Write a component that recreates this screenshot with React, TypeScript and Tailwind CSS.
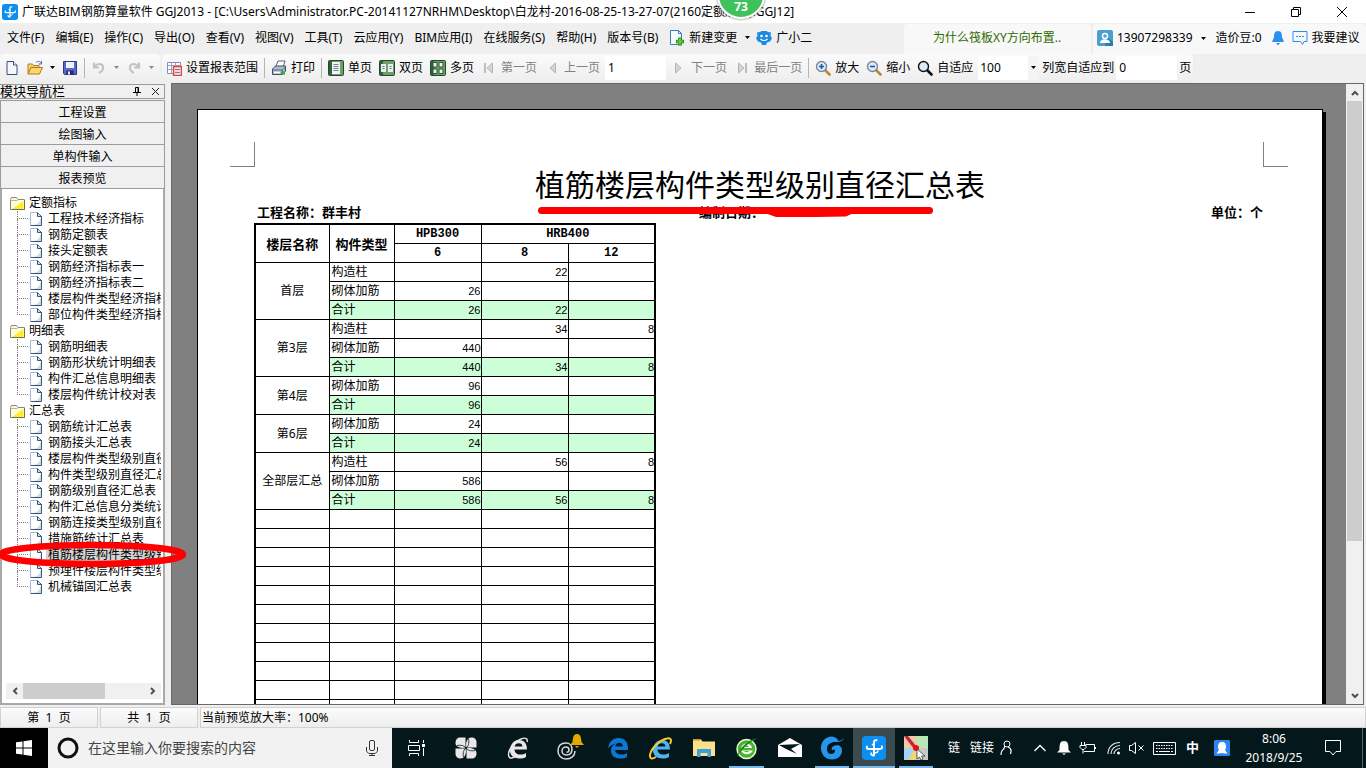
import React from "react";

const UI = "font-['Noto_Sans','Noto_Sans_CJK_SC',sans-serif]";

function Svg({ w = 16, h = 16, box, children, className = "" }: { w?: number; h?: number; box?: string; children: React.ReactNode; className?: string }) {
  return (
    <svg width={w} height={h} viewBox={box ?? `0 0 ${w} ${h}`} fill="none" aria-hidden="true" className={`shrink-0 ${className}`}>
      {children}
    </svg>
  );
}

const Caret = ({ color = "#000" }: { color?: string }) => (
  <Svg w={5} h={3}><path d="M0 0h5L2.500 3z" fill={color} /></Svg>
);

const Logo = ({ size }: { size: number }) => (
  <Svg w={size} h={size} box="0 0 24 24">
    <rect width="24" height="24" rx="4" fill="#0d8ff0" />
    <path d="M12 19.500c-2.200 0-3-1-2.800-2M12 19V6.500c0-2 .8-2.500 2.600-2.200M5 10.500c-.8 1.500 0 2.500 1.800 2.500H18c2 0 2.300-1 1.800-2.500" stroke="#fff" strokeWidth="1.900" strokeLinecap="round" />
    <path d="M12 8.500H9.800M12 16.500c2.500 1 4-.5 4-2" stroke="#fff" strokeWidth="1.500" />
  </Svg>
);

const DocIcon = () => (
  <Svg w={12} h={14}>
    <path d="M.5.500h7l4 4v9H.5z" fill="#fff" />
    <path d="M2 13c5 0 8-3 9-8v8z" fill="#d3dcee" />
    <path d="M.5 13V.5H7" stroke="#a9b8d6" />
    <path d="M7.500.500v4h4M7.500.500l4 4v9H.5" stroke="#3a5478" />
    <path d="M8.500 1.500v2h2z" fill="#9fb2d0" />
  </Svg>
);

const FolderIcon = () => (
  <Svg w={15} h={13}>
    <path d="M.5 12.500v-10l1-2h5l1.500 2h6.500v10z" fill="#fffde0" stroke="#8a8a6a" />
    <path d="M2 12L13.500 4v8z" fill="#ffef20" />
    <path d="M.5 3.500h7" stroke="#bbb890" />
    <path d="M14.500 3v9.500H1" stroke="#6b6b6b" />
  </Svg>
);

const NewIcon = () => (
  <Svg><path d="M3 1.500h6.500l3.500 3.500v9.500H3z" fill="#f4f7fd" stroke="#3b4e78" /><path d="M9.500 1.500V5H13" fill="#fff" stroke="#3b4e78" /></Svg>
);
const OpenIcon = () => (
  <Svg>
    <path d="M1 13.500V4h4.500l1 1.500H12V8" fill="#f3cf68" stroke="#b0822a" />
    <path d="M1 14l3-6.500h11.500L12.500 14z" fill="#ffd766" stroke="#a97a22" />
    <path d="M9 2.500c2-2 4-1 5 .5M14.500 1v3h-3" stroke="#4b6f9c" />
  </Svg>
);
const SaveIcon = () => (
  <Svg>
    <path d="M1.500 1.500h13v13h-12l-1-1z" fill="#5a68c8" stroke="#2c3a8c" />
    <path d="M4 2h8v6H4z" fill="#edf1fb" /><path d="M4.500 10.500h7v4h-7z" fill="#1f2a66" /><path d="M6 11.500h2v3H6z" fill="#e7ebfa" />
  </Svg>
);
const UndoIcon = ({ flip = false }: { flip?: boolean }) => (
  <Svg>
    <g transform={flip ? "translate(16 0) scale(-1 1)" : undefined}>
      <path d="M3 2.500v5h5M3.500 7C6 3 11.500 3 12 7c.4 3-2 5-4 6" stroke="#c3c3c3" strokeWidth="2.200" />
    </g>
  </Svg>
);
const RangeIcon = () => (
  <Svg>
    <path d="M1.500 2.500h13v11h-13z" fill="#fff" stroke="#8190b4" />
    <path d="M1.500 5.500h13M1.500 9.500h13M5.500 2.500v11M9.500 2.500v11" stroke="#9aa7c8" />
    <path d="M7.500 6.500h8v9h-8z" fill="#f8dcdc" stroke="#e04343" strokeWidth="1.400" /><path d="M9 9.500h5M9 12.500h5" stroke="#77809c" />
  </Svg>
);
const PrintIcon = () => (
  <Svg>
    <path d="M5 6l2-5h7l-1.500 5" fill="#fff" stroke="#54657c" />
    <path d="M1.500 9l3-3h10v5l-2.500 3.500H1.500z" fill="#aebccb" stroke="#3e4e62" />
    <path d="M1.500 10h10v4.500M11.500 10l3-3" stroke="#5a6a80" /><path d="M3 12.500h6" stroke="#fff" strokeWidth="1.500" />
    <rect x="10" y="11.500" width="4" height="3" fill="#2fb52f" />
  </Svg>
);
const PageIcon = ({ kind }: { kind: "one" | "two" | "many" }) => (
  <Svg>
    <rect x=".5" y=".5" width="15" height="15" rx="1" fill="#6f9f66" stroke="#1f4b2b" />
    <path d="M1 1h3v14H1z" fill="#2f6339" />
    {kind === "one" && <><path d="M4 2h8v12H4z" fill="#f1f5f8" /><path d="M5.500 4.500h5M5.500 6.500h5M5.500 8.500h5M5.500 10.500h5" stroke="#6f8193" /></>}
    {kind === "two" && <><path d="M2 4h5v8H2zM9 4h5v8H9z" fill="#e8eef6" /><path d="M3.500 6.500h2M3.500 8.500h2M10.500 6.500h2M10.500 8.500h2" stroke="#5f7593" /></>}
    {kind === "many" && <path d="M3 2.500h4v4.500H3zM9 2.500h4v4.500H9zM3 9h4v4.500H3zM9 9h4v4.500H9z" fill="#e8f1e5" stroke="#31583a" />}
  </Svg>
);
const StepIcon = ({ dir, bar = false }: { dir: "l" | "r"; bar?: boolean }) => (
  <Svg>
    <g transform={dir === "r" ? "translate(16 0) scale(-1 1)" : undefined}>
      <path d="M11.500 3v10L6 8z" fill="#d5d5d5" stroke="#b4b4b4" />
      {bar && <path d="M4 3v10" stroke="#bdbdbd" strokeWidth="2" />}
    </g>
  </Svg>
);
const ZoomIcon = ({ sign }: { sign: "+" | "-" | "" }) => (
  <Svg>
    <path d="M10 10l4.500 4.500" stroke={sign ? "#b88a2c" : "#111"} strokeWidth="2.600" strokeLinecap="round" />
    <circle cx="6.500" cy="6.500" r="5" fill="#dceafa" stroke={sign ? "#7b8797" : "#111"} strokeWidth="1.400" />
    {sign && <path d={sign === "+" ? "M4 6.500h5M6.500 4v5" : "M4 6.500h5"} stroke="#23579b" strokeWidth="1.600" />}
  </Svg>
);

const Sep = () => <span className="-mx-px h-5 w-px bg-[#b5b5b5]" />;

function Tool({ icon, label, disabled = false }: { icon: React.ReactNode; label: string; disabled?: boolean }) {
  return (
    <button className={`flex shrink-0 items-center gap-1 whitespace-nowrap ${disabled ? "text-[#828282]" : "text-black"}`}>
      {icon}
      {label}
    </button>
  );
}

const menus = ["文件(F)", "编辑(E)", "操作(C)", "导出(O)", "查看(V)", "视图(V)", "工具(T)", "云应用(Y)", "BIM应用(I)", "在线服务(S)", "帮助(H)", "版本号(B)"];

function TitleBar() {
  return (
    <header className="flex h-[23px] shrink-0 items-center bg-white pl-0.5 text-xs text-black">
      <Logo size={16} />
      <h1 className="ml-1 flex-1 truncate">广联达BIM钢筋算量软件 GGJ2013 - [C:\Users\Administrator.PC-20141127NRHM\Desktop\白龙村-2016-08-25-13-27-07(2160定额版本).GGJ12]</h1>
      <button aria-label="最小化" className="flex w-[46px] justify-center"><Svg w={10} h={10}><path d="M0 5.500h10" stroke="#000" /></Svg></button>
      <button aria-label="还原" className="flex w-[45px] justify-center"><Svg w={10} h={10}><path d="M.5 2.500h7v7h-7zM2.500 2.500v-2h7v7h-2" stroke="#000" /></Svg></button>
      <button aria-label="关闭" className="flex w-12 justify-center"><Svg w={10} h={10}><path d="M0 0l10 10M10 0L0 10" stroke="#000" /></Svg></button>
    </header>
  );
}

function MenuBar() {
  return (
    <nav className="flex h-[31px] shrink-0 items-stretch bg-[#efefef] pl-[7px] text-xs text-black">
      <div className="flex items-center gap-[11px] pb-0.5 whitespace-nowrap">
        {menus.map((m) => <button key={m}>{m}</button>)}
      </div>
      <button className="ml-[11px] flex items-center gap-1 pb-0.5 whitespace-nowrap">
        <Svg>
          <path d="M1.500.500h8l3 3v11h-11z" fill="#f5faff" stroke="#3d7fb5" /><path d="M9.500.500v3h3" stroke="#3d7fb5" />
          <path d="M11 7.500v8M7 11.500h8" stroke="#2a8a1f" strokeWidth="3.600" /><path d="M11 8.500v6M8 11.500h6" stroke="#5fcb35" strokeWidth="2" />
        </Svg>
        新建变更
        <span className="ml-1"><Caret /></span>
      </button>
      <button className="ml-1.5 flex items-center gap-1 pb-0.5 whitespace-nowrap">
        <Svg>
          <path d="M1 2.500L4 2l1.500-1h5L12 2l3 .5-.5 3 1.500 3-2 3-3 1-1 2.500H6l-1-2.500-3-1-2-3 1.500-3z" fill="#1a8be0" />
          <circle cx="5.500" cy="6" r="1.300" fill="#fff" /><circle cx="10.500" cy="6" r="1.300" fill="#fff" />
          <path d="M4.500 9c2 2 5 2 7 0" stroke="#fff" strokeWidth="1.200" />
        </Svg>
        广小二
      </button>
      <div className="ml-auto flex h-full shrink-0 gap-0.5 pt-px">
        <a href="#tip" className="flex w-[187px] items-center rounded-t-sm bg-[#f8f8f8] pb-0.5 pl-[29px] text-xs whitespace-nowrap text-[#2f6b00]">为什么筏板XY方向布置..</a>
        <div className="flex w-[273px] items-center rounded-t-sm bg-[#f8f8f8] pb-0.5 pl-1 whitespace-nowrap">
          <button className="flex items-center gap-1">
            <Svg>
              <rect width="16" height="16" rx="2" fill="#4a9fd0" /><path d="M10 7l6 5v4H8z" fill="#2d7eb0" />
              <circle cx="8" cy="6" r="2.500" stroke="#fff" strokeWidth="1.500" /><path d="M3 13c0-5 10-5 10 0z" fill="#fff" />
            </Svg>
            13907298339
            <span className="ml-1"><Caret /></span>
          </button>
          <span className="ml-2.5">造价豆:0</span>
          <button aria-label="消息" className="ml-2"><Svg><path d="M8 1C4.500 1 4 4 4 7l-2 5h12l-2-5c0-3-.5-6-4-6z" fill="#2b8ff0" /><path d="M6 13h4l-2 2.500z" fill="#2b8ff0" /></Svg></button>
          <button className="ml-1.5 flex items-center gap-1">
            <Svg><path d="M1 1.500h14v10h-3l-1.500 3-2-3H1z" stroke="#2b8ff0" /><path d="M4 6.500h2M7 6.500h2M10 6.500h2" stroke="#2b8ff0" /></Svg>
            我要建议
          </button>
        </div>
      </div>
    </nav>
  );
}

function ToolBar() {
  return (
    <div className="flex h-[29px] shrink-0 gap-0.5 bg-[#efefef] text-xs">
      <div className="flex w-[160px] shrink-0 items-center gap-[7px] rounded bg-gradient-to-b from-[#fbfbfb] to-[#ededed] pb-0.5 pl-1">
        <button aria-label="新建"><NewIcon /></button>
        <button aria-label="打开"><OpenIcon /></button>
        <Caret />
        <button aria-label="保存"><SaveIcon /></button>
        <Sep />
        <button aria-label="撤销"><UndoIcon /></button>
        <Caret color="#8a8a8a" />
        <button aria-label="恢复"><UndoIcon flip /></button>
        <Caret color="#8a8a8a" />
      </div>
      <div className="flex shrink-0 items-center gap-[7px] rounded bg-gradient-to-b from-[#fbfbfb] to-[#ededed] pr-0.5 pb-0.5 pl-1">
        <Tool icon={<RangeIcon />} label="设置报表范围" />
        <Sep />
        <Tool icon={<PrintIcon />} label="打印" />
        <Sep />
        <Tool icon={<PageIcon kind="one" />} label="单页" />
        <Tool icon={<PageIcon kind="two" />} label="双页" />
        <Tool icon={<PageIcon kind="many" />} label="多页" />
        <Tool icon={<StepIcon dir="l" bar />} label="第一页" disabled />
        <Tool icon={<StepIcon dir="l" />} label="上一页" disabled />
        <input aria-label="页码" defaultValue="1" className="-mx-0.5 h-6 w-[61px] bg-white px-[3px] text-black" />
        <Tool icon={<StepIcon dir="r" />} label="下一页" disabled />
        <Tool icon={<StepIcon dir="r" bar />} label="最后一页" disabled />
        <Sep />
        <Tool icon={<ZoomIcon sign="+" />} label="放大" />
        <Tool icon={<ZoomIcon sign="-" />} label="缩小" />
        <Tool icon={<ZoomIcon sign="" />} label="自适应" />
        <div className="relative -ml-0.5 flex h-6 w-[61px] items-center">
          <select aria-label="缩放比例" className="h-6 w-full appearance-none bg-white pl-0.5 text-black"><option>100</option></select>
          <span className="pointer-events-none absolute inset-y-0 right-0 flex w-[11px] items-center justify-center bg-[#f4f4f4]"><Caret /></span>
        </div>
        <label className="-ml-1 flex shrink-0 items-center gap-0.5 whitespace-nowrap text-black">
          列宽自适应到
          <input defaultValue="0" className="h-6 w-[61px] bg-white px-[3px]" />
          页
        </label>
      </div>
    </div>
  );
}

const tree = [
  { name: "定额指标", items: ["工程技术经济指标", "钢筋定额表", "接头定额表", "钢筋经济指标表一", "钢筋经济指标表二", "楼层构件类型经济指标表", "部位构件类型经济指标表"] },
  { name: "明细表", items: ["钢筋明细表", "钢筋形状统计明细表", "构件汇总信息明细表", "楼层构件统计校对表"] },
  { name: "汇总表", items: ["钢筋统计汇总表", "钢筋接头汇总表", "楼层构件类型级别直径汇总表", "构件类型级别直径汇总表", "钢筋级别直径汇总表", "构件汇总信息分类统计表", "钢筋连接类型级别直径汇总表", "措施筋统计汇总表", "植筋楼层构件类型级别直径汇总表", "预埋件楼层构件类型级别汇总表", "机械锚固汇总表"] },
];
const selected = "植筋楼层构件类型级别直径汇总表";

function SidePanel() {
  return (
    <aside className="flex w-[165px] shrink-0 flex-col text-xs text-black">
      <div className="mt-px flex h-[15px] shrink-0 items-center border border-l-0 border-[#9a9a9a] bg-[#f0f0f0]">
        <h2 className="flex-1 text-[13px] leading-[13px]">模块导航栏</h2>
        <button aria-label="固定"><Svg w={8} h={9}><path d="M2.500 5V.500h3V5M5 .500V5M0 5.500h8M4 6v3" stroke="#000" /></Svg></button>
        <button aria-label="关闭面板" className="mr-1 ml-1.5 pl-1"><Svg w={9} h={9}><path d="M1 1l7 7M8 1L1 8" stroke="#222" /></Svg></button>
      </div>
      <div className="mt-px flex shrink-0 flex-col border border-b-0 border-[#9c9c9c]">
        {["工程设置", "绘图输入", "单构件输入", "报表预览"].map((t) => (
          <button key={t} className="h-[22px] border-b border-[#9c9c9c] bg-[#f0f0f0] pt-0.5 text-center leading-5">{t}</button>
        ))}
      </div>
      <div className="flex min-h-0 flex-1 flex-col border-2 border-t-0 border-[#a9a9a9] bg-white pr-0.5">
        <div className="min-h-0 flex-1 overflow-hidden pt-1.5">
          {tree.map((g) => (
            <div key={g.name}>
              <button className="flex h-4 items-center gap-1 pl-2 leading-4"><FolderIcon />{g.name}</button>
              <ul>
                {g.items.map((t, i) => (
                  <li key={t} className="flex h-4 items-center pl-[15px]">
                    <span className="flex w-[11px] shrink-0 flex-col">
                      <span className="h-2 border-b border-l border-dotted border-[#808080]" />
                      <span className={i === g.items.length - 1 ? "h-2" : "h-2 border-l border-dotted border-[#808080]"} />
                    </span>
                    <button className="ml-0.5 flex items-center gap-1 leading-4 whitespace-nowrap">
                      <DocIcon />
                      <span className={t === selected ? "bg-[#d4d4d4] pl-0.5" : "pl-0.5"}>{t}</span>
                    </button>
                  </li>
                ))}
              </ul>
            </div>
          ))}
        </div>
        <div className="mb-1 ml-1 flex h-4 shrink-0 items-center bg-[#f0f0f0]">
          <span className="flex w-[17px] justify-center"><Svg w={6} h={8}><path d="M5 1L2 4l3 3" stroke="#505050" strokeWidth="2" /></Svg></span>
          <span className="h-full w-[82px] bg-[#cdcdcd]" />
          <span className="ml-auto flex w-[17px] justify-center"><Svg w={6} h={8}><path d="M1 1l3 3-3 3" stroke="#505050" strokeWidth="2" /></Svg></span>
        </div>
      </div>
    </aside>
  );
}

const groups = [
  { floor: "首层", rows: [["构造柱", "", "22", ""], ["砌体加筋", "26", "", ""], ["合计", "26", "22", ""]] },
  { floor: "第3层", rows: [["构造柱", "", "34", "8"], ["砌体加筋", "440", "", ""], ["合计", "440", "34", "8"]] },
  { floor: "第4层", rows: [["砌体加筋", "96", "", ""], ["合计", "96", "", ""]] },
  { floor: "第6层", rows: [["砌体加筋", "24", "", ""], ["合计", "24", "", ""]] },
  { floor: "全部层汇总", rows: [["构造柱", "", "56", "8"], ["砌体加筋", "586", "", ""], ["合计", "586", "56", "8"]] },
];

const th = "h-[19px] border border-black p-0 text-[13px] leading-[18px] font-bold";
const thCode = "h-[19px] border border-black p-0 font-['Liberation_Mono',monospace] text-xs leading-[18px] font-bold";

function ReportTable() {
  return (
    <table className="w-[401px] table-fixed border-collapse border-2 border-black text-xs">
      <colgroup>
        <col className="w-[74px]" /><col className="w-[65px]" /><col className="w-[87px]" /><col className="w-[87px]" /><col className="w-[87px]" />
      </colgroup>
      <thead>
        <tr>
          <th rowSpan={2} className={th}>楼层名称</th>
          <th rowSpan={2} className={th}>构件类型</th>
          <th className={thCode}>HPB300</th>
          <th colSpan={2} className={thCode}>HRB400</th>
        </tr>
        <tr>{["6", "8", "12"].map((n) => <th key={n} className={thCode}>{n}</th>)}</tr>
      </thead>
      <tbody>
        {groups.map((g) =>
          g.rows.map((r, i) => (
            <tr key={g.floor + i} className={r[0] === "合计" ? "bg-[#ccffd8]" : ""}>
              {i === 0 && <td rowSpan={g.rows.length} className="border border-black bg-white p-0 text-center">{g.floor}</td>}
              <td className="h-[19px] border border-black p-0 pl-0.5 leading-[18px]">{r[0]}</td>
              {r.slice(1).map((v, k) => <td key={k} className="border border-black p-0 text-right font-['Liberation_Sans',sans-serif] text-[11px] leading-[18px]">{v}</td>)}
            </tr>
          ))
        )}
        {Array.from({ length: 14 }, (_, i) => (
          <tr key={i}>{[0, 1, 2, 3, 4].map((k) => <td key={k} className="h-[19px] border border-black p-0" />)}</tr>
        ))}
      </tbody>
    </table>
  );
}

function Preview() {
  return (
    <main className="ml-1.5 flex min-w-0 flex-1 border border-[#686868] bg-[#808080]">
      <div className="flex min-w-0 flex-1 overflow-hidden pt-[25px] pr-[23px] pl-[25px]">
        <article className="min-w-0 flex-1 border border-b-0 border-black bg-white text-black shadow-[3px_3px_0_#000]">
          <div className="flex justify-between pt-8 pr-[34px] pl-8">
            <span className="h-[25px] w-[25px] border-r border-b border-[#808080]" />
            <span className="h-[25px] w-[25px] border-b border-l border-[#808080]" />
          </div>
          <div className="relative">
            <h2 className="text-center text-[30px] leading-9 whitespace-nowrap">植筋楼层构件类型级别直径汇总表</h2>
            <div className="grid h-5 grid-cols-3 px-[59px] text-[13px] leading-[19px] font-bold">
              <span>工程名称：群丰村</span>
              <span className="w-[122px] justify-self-center">编制日期：</span>
              <span className="text-right">单位：个</span>
            </div>
            <svg width="400" height="14" viewBox="0 0 400 14" aria-hidden="true" className="absolute top-[38px] left-1/2 -ml-[224px]">
              <path d="M5.500 5.500H393.500" stroke="#f00" strokeWidth="7" strokeLinecap="round" />
              <path d="M226 7h94l-10 4.500-30 .5h-40z" fill="#f00" />
            </svg>
          </div>
          <div className="pl-14"><ReportTable /></div>
        </article>
      </div>
      <div className="flex w-[17px] shrink-0 flex-col bg-[#f0f0f0]">
        <span className="flex h-[17px] items-center justify-center"><Svg w={8} h={6}><path d="M1 5l3-3 3 3" stroke="#505050" strokeWidth="2" /></Svg></span>
        <span className="mr-px ml-px h-[71%] bg-[#cdcdcd]" />
        <span className="mt-auto flex h-[17px] items-center justify-center"><Svg w={8} h={6}><path d="M1 1l3 3 3-3" stroke="#505050" strokeWidth="2" /></Svg></span>
      </div>
    </main>
  );
}

const cell = "flex items-center border border-[#d2d2d2] bg-gradient-to-b from-[#fbfbfb] to-[#eeeeee]";

function StatusBar() {
  return (
    <footer className="mt-0.5 flex h-[21px] shrink-0 gap-0.5 bg-[#efefef] text-xs text-black">
      <span className={`${cell} w-[98px] justify-center`}>第&nbsp; 1&nbsp; 页</span>
      <span className={`${cell} w-[98px] justify-center`}>共&nbsp; 1&nbsp; 页</span>
      <span className={`${cell} flex-1 pl-px`}>当前预览放大率：100%</span>
    </footer>
  );
}

function TaskButton({ label, wide = "w-[43px]", line = "", children }: { label: string; wide?: string; line?: string; children: React.ReactNode }) {
  return (
    <button aria-label={label} className={`relative flex h-10 shrink-0 items-center justify-center ${wide}`}>
      {children}
      {line && <span className={`absolute bottom-0 h-0.5 bg-[#76b9ed] ${line}`} />}
    </button>
  );
}

const eShape = "M4 14.500C4.500 8 8 4 13 4c5.500 0 8 4 8 9.500H8.500c.2 3.500 2.500 5 5.500 5 2.500 0 4.500-.6 6-1.600v4c-1.700 1-4 1.600-6.500 1.600C8 22.500 4 19.500 4 14.500zM8.600 10.500h7.800C16.400 8.500 15 7.300 12.800 7.300c-2.200 0-3.700 1.200-4.200 3.200z";

function TaskBar() {
  return (
    <div className="flex h-10 shrink-0 items-center bg-[#04171b] text-xs text-white">
      <button aria-label="开始" className="flex h-full w-12 shrink-0 items-center justify-center bg-black">
        <Svg w={16} h={16}><path d="M0 2.300l6.500-.9v6.100H0zM7.500 1.200L16 0v7.500H7.500zM0 8.500h6.500v6.100L0 13.700zM7.500 8.500H16V16l-8.500-1.200z" fill="#fff" /></Svg>
      </button>
      <div className="flex h-full w-[344px] shrink-0 items-center bg-[#f2f2f2] pl-[9px]">
        <Svg w={22} h={22}><circle cx="11" cy="11" r="9" stroke="#111" strokeWidth="3" /></Svg>
        <input aria-label="搜索" placeholder="在这里输入你要搜索的内容" className="ml-[9px] min-w-0 flex-1 bg-transparent text-sm text-black outline-none placeholder:text-[#454545]" />
        <Svg w={12} h={16} className="mr-3.5"><rect x="3.500" y=".5" width="5" height="10" rx="1.500" stroke="#333" /><path d="M.5 7v3c0 2 1.500 3.500 3.500 3.500h4c2 0 3.500-1.500 3.500-3.500V7M6 13.500V16M3 15.500h6" stroke="#333" /></Svg>
      </div>
      <TaskButton label="任务视图" wide="w-12">
        <Svg w={17} h={16}><path d="M1.500 0v2.500h9V0M1.500 16v-2.500h9V16M.5 5.500h11v5H.5zM15.500 0v3M15.500 8v8" stroke="#fff" /><path d="M14 4h3v3h-3z" fill="#fff" /></Svg>
      </TaskButton>
      <TaskButton label="应用" wide="w-[52px]">
        <Svg w={22} h={22}>
          <path d="M5 .5h5.500v10C6 12 0 9.500.5 5.500.5 2.500 2.500.500 5 .5z" fill="#e8e8e8" />
          <path d="M21.500 5v5.500h-10C10 6 12.500 0 16.500.5c3 0 5 2 5 4.500z" fill="#e8e8e8" />
          <path d="M17 21.500h-5.500v-10C16 10 22 12.500 21.500 16.500c0 3-2 5-4.500 5z" fill="#e8e8e8" />
          <path d="M.5 17v-5.500h10C12 16 9.500 22 5.500 21.500c-3 0-5-2-5-4.500z" fill="#e8e8e8" />
          <path d="M2 8.500c4-1 8 .5 9 2.500M13.500 2c1 4-.5 8-2.500 9M20 13.500c-4 1-8-.5-9-2.500M8.500 20c-1-4 .5-8 2.500-9" stroke="#04171b" strokeWidth=".8" />
        </Svg>
      </TaskButton>
      <TaskButton label="浏览器" wide="w-[52px]">
        <Svg w={24} h={24}><path d={eShape} fill="#e8e8e8" fillRule="evenodd" /><path d="M21 6c1-3-1-5-6-3C9 5 3 12 2.500 18c-.3 4 2 5 6 3" stroke="#e8e8e8" strokeWidth="1.400" /></Svg>
      </TaskButton>
      <TaskButton label="提醒" wide="w-[52px]">
        <Svg w={28} h={28}>
          <path d="M19 17c0 5-4 8-9 8-5 0-8-4-8-8 0-5 3-8 8-8 4 0 6 3 6 6 0 4-2 6-5.500 6C7 21 6 18.500 6 17c0-2.500 2-4 4-4s3 1.500 3 3-1 2.300-2.500 2.300" stroke="#d9d9d9" strokeWidth="1.500" />
          <path d="M21 0c-4 0-4 4-4.500 8L14 11h14l-2.500-3C25 4 25 0 21 0zM19 12h4l-2 2z" fill="#e2a900" />
        </Svg>
      </TaskButton>
      <TaskButton label="Edge"><Svg w={24} h={24}><path d="M2 12.500C3 6 7 2 12.500 2 18.500 2 22 6 22 12.500V14H9c.3 3 3 4.500 6 4.500 2.500 0 4.500-.7 6-1.600v4c-2 1-4.300 1.600-7 1.600-5.500 0-9-3-9-8 0-3.500 2-5.700 5-7C6.500 8.200 4 10 2 12.500zM9.200 10.500h7.500c0-2.300-1.300-3.800-3.500-3.800-2.200 0-3.600 1.500-4 3.800z" fill="#0a78d7" fillRule="evenodd" /></Svg></TaskButton>
      <TaskButton label="Internet Explorer"><Svg w={26} h={24}><path d={eShape} fill="#4db4f0" fillRule="evenodd" transform="translate(1 0)" /><path d="M22 8c2-4 1-6.500-3-5.500C12 4 3 12 2 19c-.5 4 2 4.500 6 2" stroke="#f7c92f" strokeWidth="2" /></Svg></TaskButton>
      <TaskButton label="文件资源管理器"><Svg w={22} h={20}><path d="M0 1.500h8l1.500 2H22V18H0z" fill="#ffe08a" /><path d="M0 1.500h8l1 1.500H0z" fill="#e8b93c" /><path d="M4 19v-8h14v8h-3.500v-4h-7v4z" fill="#35a3e0" /></Svg></TaskButton>
      <TaskButton label="360浏览器" line="inset-x-1">
        <Svg w={24} h={24}><circle cx="11.500" cy="13" r="9.500" fill="#49b52b" stroke="#e9f7e3" strokeWidth="1.500" /><path d="M6 12c1-6 10-6 11 0zM6 14.500h12c-2 4.500-10 5.500-12 0z" fill="#fff" /><path d="M9 11c1-2 4-2 5 0zM9 15h5c-1 1.500-4 1.500-5 0z" fill="#49b52b" /><path d="M2 21C4 12 12 4 23 2 15 6 8 11 2 21z" fill="#238a1e" /></Svg>
      </TaskButton>
      <TaskButton label="邮件"><Svg w={24} h={20}><path d="M0 7L12 0l12 7v12H0z" fill="#fff" /><path d="M1 7l21-1-9 5 6 5-11-5z" fill="#04171b" /></Svg></TaskButton>
      <TaskButton label="广联达" wide="w-[42px]" line="inset-x-1"><Svg w={24} h={24}><path d="M24 2c-2 2.500-4 3-6 2.500C17 1.500 14 .5 11 .5 5 1 1 6 1 12c0 7 5 11.500 11 11.500 6 0 10-4 10-9 0-4-3-6-7-5-3 .7-4 3-3 5 1-1.500 3-1.500 3 .5 0 2-2 3-4 3-3 0-4-3-4-5 0-5 4-7 8-7 5 .3 8-1 9-4z" fill="#2596ea" /></Svg></TaskButton>
      <TaskButton label="GGJ2013" wide="w-[42px] bg-[#3b4a4e]" line="inset-x-0"><Logo size={24} /></TaskButton>
      <TaskButton label="画图" wide="w-[42px]" line="inset-x-1">
        <Svg w={24} h={24}>
          <path d="M0 0h24v24H0z" fill="#dfeaf2" /><path d="M12 12V0h12v12z" fill="#b8e6b4" /><path d="M0 0h12v12H0z" fill="#f3c9a2" /><path d="M0 12h12v12H0z" fill="#a9d3f5" /><path d="M12 12h12v12H12z" fill="#c9c9c9" /><path d="M4 24L12 12v12z" fill="#f6d66a" />
          <path d="M0 0h4l9 11-3 2z" fill="#c2263a" /><circle cx="12" cy="12" r="3" fill="#f01010" />
          <path d="M13 13v10l2.500-2 1.500 3 2-1-1.500-3H21z" fill="#fff" stroke="#222" strokeWidth=".7" />
        </Svg>
      </TaskButton>
      <div className="ml-auto flex h-full shrink-0 items-center whitespace-nowrap">
        <span>链</span>
        <span className="ml-2.5">链接</span>
        <Svg w={12} h={16} className="ml-1.5"><circle cx="7" cy="4" r="3" stroke="#fff" /><path d="M5 6L3.500 9.500M8 7c3 1 3.500 4 2.500 7M4 9c-2 1-3 3-3 6" stroke="#fff" strokeWidth="1.200" /></Svg>
        <Svg w={12} h={8} className="ml-[22px]"><path d="M.5 7L6 1.500 11.500 7" stroke="#fff" strokeWidth="1.300" /></Svg>
        <Svg w={14} h={14} className="ml-[11px]"><path d="M7 0C3 0 2.500 3 2.500 9L0 11.500h14L11.500 9C11.500 3 11 0 7 0zM5 12.500h4L7 14z" fill="#fff" /></Svg>
        <Svg w={17} h={12} className="ml-2"><path d="M6.500 2.500h9v7H5M2.500 0v3M5.500 0v3M1 3.500h6v2L5 7.500H3L1 5.500zM4 7v4.500M16.500 5v2" stroke="#fff" /></Svg>
        <Svg w={14} h={14} className="ml-[11px]"><circle cx="11.500" cy="12" r="1.500" fill="#fff" /><path d="M1 13C1 6 6 1.500 13 1.500M4 13c0-5 4-8.500 9-8.500M7 13c0-3 3-5.500 6-5.500" stroke="#e6e6e6" strokeWidth="1.200" /></Svg>
        <Svg w={15} h={12} className="ml-2"><path d="M.5 3.500h2L6.500.500v11l-4-3h-2zM9.500 3.500l5 5M14.500 3.500l-5 5" stroke="#fff" /></Svg>
        <Svg w={23} h={13} className="ml-[9px]"><path d="M.5.500h22v12H.5z" stroke="#fff" /><path d="M3 3.500h17M3 6.500h17" stroke="#fff" strokeDasharray="1.500 1" /><path d="M3 9.500h2M6 9.500h11M18 9.500h2" stroke="#fff" /></Svg>
        <button className="ml-2.5 text-[13px] font-bold">中</button>
        <Svg w={16} h={16} className="ml-[15px]"><rect width="16" height="16" rx="1.500" fill="#2b86f0" /><path d="M8 2C5 2 4 4 4 6.500S5 10 5 10l-2.500 3.500h3L8 13l2.500.500h3L11 10s1-1 1-3.500S11 2 8 2z" fill="#fff" /></Svg>
        <time className="ml-1 w-20 text-center leading-[19px]">8:06<br />2018/9/25</time>
        <button aria-label="通知" className="ml-[11px]"><Svg w={16} h={16}><path d="M.5.500h15v11h-4.500l-3 3.500-3-3.500H.5z" stroke="#fff" /></Svg></button>
        <span className="mr-[3px] ml-[21px] h-full w-px bg-[#5c6668]" />
      </div>
    </div>
  );
}

export default function App() {
  return (
    <div className={`relative flex h-screen flex-col overflow-hidden bg-[#efefef] ${UI}`}>
      <TitleBar />
      <MenuBar />
      <ToolBar />
      <div className="flex min-h-0 flex-1 pr-0.5">
        <SidePanel />
        <Preview />
      </div>
      <StatusBar />
      <TaskBar />
      <div className="absolute -top-[29px] left-1/2 ml-[34px] flex h-12 w-12 items-end justify-center rounded-full border-2 border-white bg-[#3fc25b] pb-0.5 text-xs font-bold text-white shadow-[0_0_3px_#777]">73</div>
      <svg width="190" height="30" viewBox="0 0 190 30" fill="none" aria-hidden="true" className="pointer-events-none absolute top-[540px] left-0">
        <ellipse cx="92" cy="14.500" rx="91" ry="9.500" stroke="#f00" strokeWidth="6.500" />
      </svg>
    </div>
  );
}
